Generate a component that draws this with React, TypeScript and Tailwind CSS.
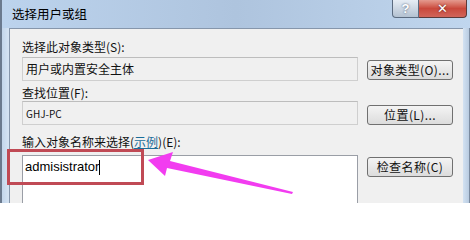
const cjk = "font-['Noto_Sans_CJK_SC','Noto_Sans',sans-serif]";

function TitleButtons() {
  return (
    <div className="flex h-[18px] self-start mr-[3px]">
      <div className="w-[27px] h-[18px] flex items-center justify-center border border-t-0 border-[#5b6b80] rounded-bl-[4px] bg-gradient-to-b from-[#e6edf5] to-[#b3c1d1] text-white text-[13px] font-bold leading-none font-['Liberation_Sans',sans-serif] [text-shadow:0_0_2px_#44536a]">
        ?
      </div>
      <div className="w-[48px] h-[18px] flex items-center justify-center border border-t-0 border-l-0 border-[#5b3a3a] rounded-br-[4px] bg-gradient-to-b from-[#e49a8f] via-[#c9483c] to-[#d1655a] text-white text-[13px] font-bold leading-none font-['DejaVu_Sans',sans-serif] [text-shadow:0_0_2px_#4a1a14]">
        ✕
      </div>
    </div>
  );
}

function WinButton({ children, className = "" }: { children: React.ReactNode; className?: string }) {
  return (
    <div
      className={`ml-[9px] w-[86px] h-[20px] flex items-center justify-center border border-[#707070] rounded-[3px] bg-gradient-to-b from-[#f4f4f4] to-[#dcdcdc] text-[12px] leading-none text-[#111] tracking-[0.4px] ${cjk} ${className}`}
    >
      {children}
    </div>
  );
}

export default function App() {
  return (
    <div className="relative w-[470px] h-[203px] overflow-hidden flex flex-col bg-[#cbddf1] border-l-2 border-[#6b7a8e]">
      {/* title bar */}
      <div className="h-[28px] flex items-start bg-gradient-to-r from-[#bcd3ed] via-[#aec4de] to-[#c0d6ee]">
        <div className={`flex-1 pl-[10px] pt-[7px] text-[12.5px] leading-[14px] text-black ${cjk}`}>选择用户或组</div>
        <TitleButtons />
      </div>

      {/* body */}
      <div className="flex flex-1 min-h-0">
        <div className="w-[7px] bg-gradient-to-r from-[#c3d6eb] to-[#d6e4f3]" />
        <div className="flex-1 min-h-0 bg-[#f0f0f0] border-l border-t border-[#8696ab] pl-[12px] pt-[11px] flex flex-col">
          <div className={`h-[14px] text-[12px] leading-[14px] text-[#111] ${cjk}`}>选择此对象类型(S):</div>

          <div className="mt-[3px] flex items-start">
            <div className={`w-[336px] h-[24px] border border-[#cfcfcf] border-t-[#bdbdbd] bg-[#f0f0f0] pl-[3px] flex items-center text-[12px] text-[#111] ${cjk}`}>
              用户或内置安全主体
            </div>
            <WinButton className="mt-[3px]">对象类型(O)...</WinButton>
          </div>

          <div className={`mt-[5px] h-[14px] text-[12px] leading-[14px] text-[#111] ${cjk}`}>查找位置(F):</div>

          <div className="mt-[1px] flex items-start">
            <div className={`w-[336px] h-[24px] border border-[#cfcfcf] border-t-[#bdbdbd] bg-[#f0f0f0] pl-[3px] flex items-center text-[10px] text-[#111] ${cjk}`}>
              GHJ-PC
            </div>
            <WinButton className="mt-[4px]">位置(L)...</WinButton>
          </div>

          <div className={`mt-[10px] h-[14px] text-[12px] leading-[14px] text-[#111] ${cjk}`}>
            输入对象名称来选择(<span className="text-[#1a6d9a] underline">示例</span>)(E):
          </div>

          <div className="mt-[6px] flex items-start">
            <div className="w-[336px] h-[80px] border border-[#9a9ea6] bg-white pl-[2px] pt-[3px] flex items-start">
              <span className="text-[13px] leading-[16px] text-black font-['Liberation_Sans',sans-serif]">admisistrator</span>
              <span className="w-px h-[15px] bg-black mt-[1px]" />
            </div>
            <WinButton className="mt-[2px]">检查名称(C)</WinButton>
          </div>
        </div>
        <div className="w-[7px] bg-gradient-to-r from-[#d3e2f2] to-[#b9cbe0] border-r border-[#7b8ba0]" />
      </div>

      {/* annotation overlay */}
      <div className="absolute left-[5px] top-[149px] w-[137px] h-[36px] border-[3px] border-[#c04a55]" />
      <svg className="absolute left-[-2px] top-0" width="470" height="203" viewBox="0 0 470 203">
        <polygon
          points="148,160 173,152 170,161 293,192 292,194 167,168 165,176"
          fill="#f23cf0"
        />
      </svg>
    </div>
  );
}
